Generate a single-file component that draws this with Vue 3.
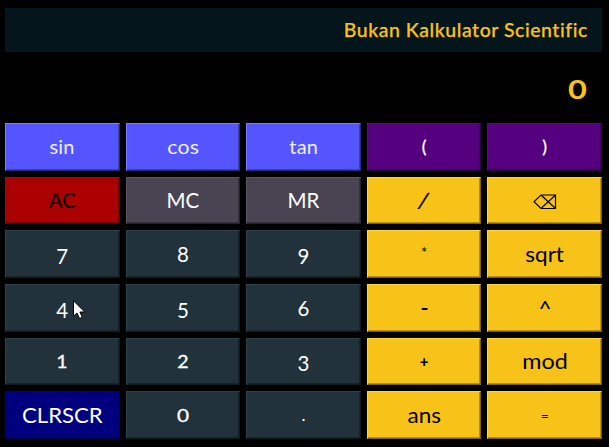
<script setup>
const keys = [
  ['sin', 'func'], ['cos', 'func wide'], ['tan', 'func'], ['(', 'paren'], [')', 'paren'],
  ['AC', 'clear'], ['MC', 'memory'], ['MR', 'memory'], ['/', 'op slash'], ['⌫', 'op erase'],
  ['7', 'num low'], ['8', 'num'], ['9', 'num low'], ['*', 'op star'], ['sqrt', 'op word'],
  ['4', 'num low'], ['5', 'num low'], ['6', 'num'], ['-', 'op minus'], ['^', 'op caret'],
  ['1', 'num short'], ['2', 'num short'], ['3', 'num low'], ['+', 'op plus'], ['mod', 'op word mod'],
  ['CLRSCR', 'screen'], ['0', 'num short zero'], ['.', 'num dot'], ['ans', 'op word'], ['=', 'op equals'],
]
</script>

<template>
  <main class="calculator">
    <header class="title"><span>Bukan Kalkulator Scientific</span></header>
    <output class="display"><span>0</span></output>
    <section class="keys">
      <button v-for="[label, kind] in keys" :key="label" :class="kind">
        <svg v-if="label === '⌫'" width="24" height="16" viewBox="0 0 24 16" aria-label="⌫">
          <path d="M8 1H22.5V14.5H8L1 7.75ZM8.5 1.5L22 14M22 1.5L8.5 14" fill="none" stroke="#000" stroke-width="1.2" />
        </svg>
        <span v-else>{{ label }}</span>
      </button>
    </section>
    <svg class="cursor" width="13" height="20" viewBox="0 0 13 20">
      <path d="M.5 .8V16.2L4 13L6.6 18.6L9.3 17.3L6.9 12H11.8Z" fill="#fff" stroke="#000" stroke-width="1" />
    </svg>
  </main>
</template>

<style>
body { background: #000; overflow: hidden; }
</style>

<style scoped>
.calculator {
  box-sizing: border-box;
  position: relative;
  width: 609px;
  height: 447px;
  padding: 8px 7px 8px 5px;
  background: #000;
  font-family: Lato, "Open Sans", sans-serif;
  display: flex;
  flex-direction: column;
}
.title {
  box-sizing: border-box;
  height: 44px;
  padding-right: 14px;
  background: #04151c;
  color: #f8c319;
  font-size: 19px;
  font-weight: 500;
  letter-spacing: .55px;
  -webkit-text-stroke: .25px;
  display: flex;
  align-items: center;
  justify-content: flex-end;
}
.title span { transform: translateY(-1px) scaleX(1.022); transform-origin: right; }
.display {
  height: 71px;
  padding-right: 16px;
  color: #f8c319;
  font-size: 26px;
  font-weight: 700;
  display: flex;
  align-items: center;
  justify-content: flex-end;
}
.display span { transform: translate(-1px, 1px) scaleX(1.25); }
.keys {
  height: 316px;
  display: grid;
  grid-template-columns: repeat(5, 1fr);
  grid-template-rows: repeat(6, 1fr);
  gap: 6px;
}
button {
  min-width: 0;
  padding: 0;
  border: 1px solid;
  border-color: #2b424b #10191e #10191e #2b424b;
  box-shadow: inset -1px -1px #17232a;
  background: #22323a;
  color: #fff;
  font-family: inherit;
  font-size: 20.5px;
  line-height: 24px;
  display: flex;
  align-items: center;
  justify-content: center;
}
.func {
  background: #5555ff;
  border-color: #7c7cff #29297c #29297c #7c7cff;
  box-shadow: inset -1px -1px #3d3dba;
  color: #f0f0ff;
  font-size: 19px;
  letter-spacing: .2px;
}
.func span { transform: scaleX(1.05); }
.wide span { transform: scaleX(1.12); }
.paren {
  background: #55007f;
  border-color: #5b0888 #29003e #29003e #5b0888;
  box-shadow: inset -1px -1px #41005f;
  font-size: 18px;
  -webkit-text-stroke: .3px;
}
.paren span { transform: translateY(-1px); }
.clear {
  background: #aa0000;
  border-color: #b00505 #520000 #520000 #b00505;
  box-shadow: inset -1px -1px #7d0000;
  color: #000;
}
.memory {
  background: #494451;
  border-color: #5b5663 #242128 #242128 #5b5663;
  box-shadow: inset -1px -1px #35313b;
}
.screen {
  background: #00007f;
  border-color: #00007f #00003e #00003e #00007f;
  box-shadow: none;
}
.screen span { transform: scaleX(1.08); }
.op {
  background: #f8c318;
  border-color: #ffd543 #79600c #79600c #ffd543;
  box-shadow: inset -1px -1px #b58e12;
  color: #000;
}
.word span { transform: scaleX(1.1); }
.mod span { transform: scaleX(1.14); }
.low span { transform: translateY(2px); }
.short { font-size: 17px; -webkit-text-stroke: .3px; }
.short span { transform: translateY(1px) scaleX(1.15); }
.short.zero span { transform: translateY(1px) scaleX(1.22); }
.slash { -webkit-text-stroke: .4px; }
.slash span { transform: skewX(-13deg); }
.erase svg { transform: translateY(2px); }
.star { font-size: 15px; }
.star span { transform: translateY(-2px); }
.minus { font-size: 19px; font-weight: 700; }
.minus span { transform: scaleX(1.15); }
.plus { font-size: 15px; font-weight: 900; }
.caret span { transform: scaleX(1.1); }
.dot { font-size: 17px; }
.equals { font-size: 14px; }
.equals span { transform: translateY(1px); }
.cursor { position: absolute; left: 73px; top: 300px; }
</style>
